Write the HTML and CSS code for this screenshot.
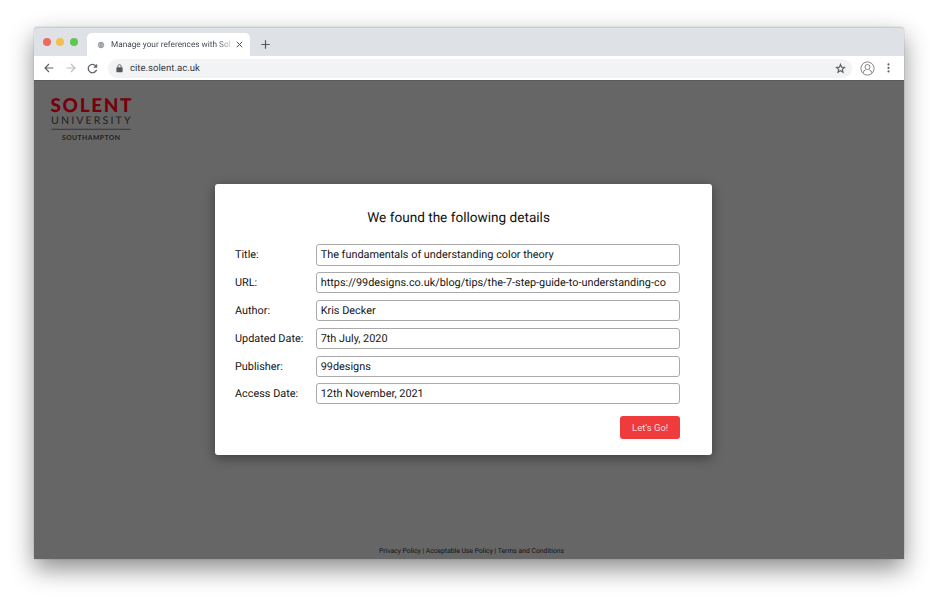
FILE: index.html
```html
<!DOCTYPE html>
<html lang="en">
<head>
<meta charset="utf-8">
<title>Manage your references with Solent</title>
<link rel="stylesheet" href="styles.css">
</head>
<body>
<div class="window">
  <div class="tabstrip">
    <div class="lights"><i class="red"></i><i class="amber"></i><i class="green"></i></div>
    <div class="tab">
      <svg class="globe" width="8" height="8" viewBox="0 0 8 8" fill="#c4c6c8" stroke="#8b8e91" stroke-width=".6"><circle cx="4" cy="4" r="2.9"/><path d="M1 4h6M4 1v6M2 2q2 1 4 0M2 6q2-1 4 0"/></svg>
      <span class="tab-title">Manage your references with Sol</span>
      <svg class="close" width="7" height="7" viewBox="0 0 7 7" stroke="#4b4f54" stroke-width="1"><path d="M.8 .8l5.4 5.4M6.2 .8L.8 6.2"/></svg>
    </div>
    <svg class="plus" width="9" height="9" viewBox="0 0 9 9" stroke="#55595e" stroke-width="1.2"><path d="M4.5 .3v8.4M.3 4.5h8.4"/></svg>
  </div>
  <div class="toolbar">
    <svg class="back" width="10" height="10" viewBox="0 0 10 10" fill="none" stroke="#5f6368" stroke-width="1.2"><path d="M9.3 5H1.3M5 1L1 5l4 4"/></svg>
    <svg class="forward" width="10" height="10" viewBox="0 0 10 10" fill="none" stroke="#bcbec1" stroke-width="1.2"><path d="M.7 5h8M5 1l4 4-4 4"/></svg>
    <svg class="reload" width="11" height="11" viewBox="0 0 11 11" fill="none" stroke="#5f6368" stroke-width="1.3"><path d="M9 3.3A4.2 4.2 0 1 0 9.5 6.7"/><path d="M10.2 .8v4H6.2z" fill="#5f6368" stroke="none"/></svg>
    <div class="address">
      <svg width="7" height="9" viewBox="0 0 7 9"><rect x=".4" y="3.2" width="6.2" height="5" rx=".7" fill="#55595e"/><path d="M1.9 3.5V2.3a1.6 1.6 0 0 1 3.2 0v1.2" fill="none" stroke="#55595e" stroke-width=".9"/></svg>
      <span class="host">cite.solent.ac.uk</span>
      <svg class="star" width="11" height="11" viewBox="0 0 11 11" fill="none" stroke="#5f6368" stroke-width="1.2"><path d="M5.5 1.5l1.1 2.7 2.9.3-2.2 1.9.7 2.8-2.5-1.5L3 9.2l.7-2.8-2.2-1.9 2.9-.3z"/></svg>
    </div>
    <svg class="profile" width="15" height="15" viewBox="0 0 15 15" fill="none" stroke="#85888c" stroke-width="1"><circle cx="7.5" cy="7.5" r="6.6"/><circle cx="7.5" cy="6" r="2.5"/><path d="M3.3 12.3V11.6q0-2 2.4-2.7M11.7 12.3V11.6q0-2-2.4-2.7"/></svg>
    <svg class="dots" width="3" height="10" viewBox="0 0 3 10" fill="#5f6368"><circle cx="1.5" cy="1.4" r="1.05"/><circle cx="1.5" cy="4.9" r="1.05"/><circle cx="1.5" cy="8.4" r="1.05"/></svg>
  </div>
  <main class="page">
    <svg class="logo" width="90" height="50" viewBox="0 -4 90 50">
      <text class="logo-name" x="0.5" y="15.8" textLength="81">SOLENT</text>
      <text class="logo-kind" x="1" y="28.4" textLength="79.5">UNIVERSITY</text>
      <path d="M1.5 33.3h79" stroke="#292929" stroke-width=".8"/>
      <text class="logo-city" x="12" y="43.5" textLength="58">SOUTHAMPTON</text>
    </svg>
    <form class="modal">
      <h1>We found the following details</h1>
      <div class="fields">
        <span class="label">Title:</span><div class="input">The fundamentals of understanding color theory</div>
        <span class="label">URL:</span><div class="input">https://99designs.co.uk/blog/tips/the-7-step-guide-to-understanding-co</div>
        <span class="label">Author:</span><div class="input">Kris Decker</div>
        <span class="label">Updated Date:</span><div class="input">7th July, 2020</div>
        <span class="label">Publisher:</span><div class="input">99designs</div>
        <span class="label">Access Date:</span><div class="input">12th November, 2021</div>
      </div>
      <button type="button">Let’s Go!</button>
    </form>
    <footer>Privacy Policy | Acceptable Use Policy | Terms and Conditions</footer>
  </main>
</div>
</body>
</html>
```
FILE: styles.css
```css
* { box-sizing: border-box; }
body {
  margin: 0;
  height: 600px;
  overflow: hidden;
  background: #fff;
  font-family: Roboto, "Liberation Sans", sans-serif;
  text-rendering: geometricPrecision;
}
svg { display: block; flex: none; }
.window {
  width: 870px;
  height: 532px;
  margin: 27px 0 0 34px;
  border-radius: 4px 4px 0 0;
  box-shadow: 0 0 1px rgba(0, 0, 0, .5), 0 10px 24px rgba(0, 0, 0, .45);
}
.tabstrip {
  display: flex;
  height: 29px;
  background: #dee1e6;
  border-top: 1px solid #cbcdd0;
  border-radius: 4px 4px 0 0;
}
.lights { display: flex; gap: 5.4px; padding: 10px 0 0 8.5px; width: 53px; }
.lights i { width: 8.2px; height: 8.2px; border-radius: 50%; flex: none; }
.red { background: #ed6a5e; }
.amber { background: #f4bf4f; }
.green { background: #61c554; }
.tab {
  display: flex;
  align-items: center;
  width: 163px;
  height: 23px;
  margin-top: 5px;
  padding: 0 7px 0 10px;
  background: #fff;
  border-radius: 5px 5px 0 0;
}
.tab-title {
  flex: 1;
  margin: 0 5px 0 6px;
  white-space: nowrap;
  font-size: 8.25px;
  line-height: 12px;
  color: #45494d;
  -webkit-mask-image: linear-gradient(90deg, #000 88%, transparent 104%);
  mask-image: linear-gradient(90deg, #000 88%, transparent 104%);
}
.plus { margin: 12px 0 0 10.5px; }
.toolbar {
  display: flex;
  align-items: center;
  height: 24px;
  padding: 0 14px 0 10px;
  background: #fff;
}
.forward { margin-left: 12px; }
.reload { margin-left: 11px; }
.address {
  display: flex;
  align-items: center;
  flex: 1;
  height: 19px;
  margin: 0 8px 0 10px;
  padding: 0 6px 0 8px;
  border-radius: 10px;
  background: #f1f3f4;
}
.host { flex: 1; margin-left: 7px; padding-top: 1px; font-size: 9.6px; line-height: 12px; color: #36393d; }
.dots { margin-left: 12px; }
.page {
  display: flex;
  flex-direction: column;
  align-items: flex-start;
  height: 479px;
  background: #666;
  border-top: 1px solid #5a5a5a;
}
.logo { margin: 11px 0 0 16px; font-family: Lato, sans-serif; }
.logo-name { font-size: 19px; font-weight: 900; fill: #78000c; }
.logo-kind { font-size: 10.6px; fill: #222; }
.logo-city { font-size: 6.8px; font-weight: 700; fill: #222; }
.modal {
  display: flex;
  flex-direction: column;
  width: 496.7px;
  height: 271.6px;
  margin: 41.8px 0 0 181.4px;
  padding: 24px 31.9px 0 19.6px;
  background: #fff;
  border-radius: 3px;
  box-shadow: 0 3px 12px rgba(0, 0, 0, .4);
}
h1 {
  margin: 0 0 0 2px;
  font-size: 13.6px;
  font-weight: 400;
  line-height: 20px;
  text-align: center;
  color: #111;
}
.fields {
  display: grid;
  grid-template-columns: 80.7px 1fr;
  row-gap: 6.6px;
  margin-top: 16.6px;
  font-size: 10.88px;
  color: #151515;
}
.label { line-height: 22px; }
.input {
  padding: 0 4px;
  border: 1px solid #aaa;
  border-radius: 3px;
  line-height: 20px;
  white-space: nowrap;
}
.label, .input { height: 21.2px; }
button {
  align-self: flex-end;
  width: 60px;
  height: 23px;
  margin-top: 11.7px;
  padding: 0;
  border: 0;
  border-radius: 3px;
  background: #ef3b3b;
  color: #fcd9d9;
  font: 9.5px/23px Roboto, sans-serif;
}
footer { align-self: center; margin: 90.8px 0 0 5px; font-size: 6.8px; line-height: 10px; color: #111; }
```
